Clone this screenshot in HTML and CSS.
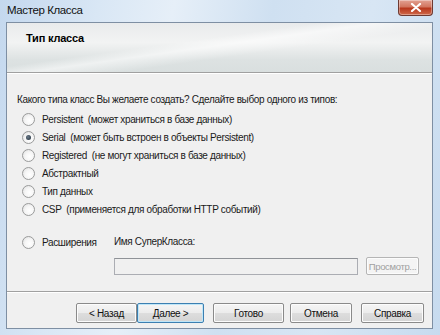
FILE: index.html
```html
<!DOCTYPE html>
<html lang="ru">
<head>
<meta charset="utf-8">
<title>Мастер Класса</title>
<link rel="stylesheet" href="styles.css">
</head>
<body>
<div class="window">
  <div class="titlebar">
    <span class="title">Мастер Класса</span>
    <div class="close"><svg width="12" height="9" viewBox="0 0 12 9"><path d="M2 1 L10 8 M10 1 L2 8" stroke="#fff" stroke-width="2.2" stroke-linecap="round"/></svg></div>
  </div>
  <div class="client">
    <div class="banner">
      <div class="banner-title">Тип класса</div>
    </div>
    <div class="content">
      <div class="question">Какого типа класс Вы желаете создать? Сделайте выбор одного из типов:</div>
      <div class="options">
        <div class="opt"><span class="radio"></span><span>Persistent&nbsp; (может храниться в базе данных)</span></div>
        <div class="opt"><span class="radio checked"></span><span>Serial&nbsp; (может быть встроен в объекты Persistent)</span></div>
        <div class="opt"><span class="radio"></span><span>Registered&nbsp; (не могут храниться в базе данных)</span></div>
        <div class="opt"><span class="radio"></span><span>Абстрактный</span></div>
        <div class="opt"><span class="radio"></span><span>Тип данных</span></div>
        <div class="opt"><span class="radio"></span><span>CSP&nbsp; (применяется для обработки HTTP событий)</span></div>
      </div>
      <div class="ext-row">
        <div class="opt ext-opt"><span class="radio"></span><span>Расширения</span></div>
        <div class="super-label">Имя СуперКласса:</div>
      </div>
      <div class="super-row">
        <div class="super-input"></div>
        <div class="btn btn-browse">Просмотр...</div>
      </div>
    </div>
    <div class="separator"></div>
    <div class="buttons">
      <div class="btn btn-back">&lt; Назад</div>
      <div class="btn btn-next">Далее &gt;</div>
      <div class="btn btn-finish">Готово</div>
      <div class="btn btn-cancel">Отмена</div>
      <div class="btn btn-help">Справка</div>
    </div>
  </div>
</div>
</body>
</html>
```
FILE: styles.css
```css
* { box-sizing: border-box; }
html, body { margin: 0; padding: 0; }
body {
  width: 440px;
  height: 335px;
  overflow: hidden;
  font-family: "Liberation Sans", Arial, sans-serif;
  font-size: 10px;
  letter-spacing: -0.35px;
  color: #1a1a1a;
}
.window {
  width: 440px;
  height: 335px;
  display: flex;
  flex-direction: column;
  background: linear-gradient(100deg, #c4d8ee 0%, #d9e7f5 20%, #e6eff8 35%, #cfe0f1 55%, #d8e6f4 75%, #c7dbef 100%);
}
.titlebar {
  height: 22px;
  position: relative;
  display: flex;
  align-items: center;
  padding-left: 7px;
}
.title {
  font-size: 11.5px;
  letter-spacing: -0.4px;
  color: #111;
  padding-bottom: 2px;
}
.close {
  position: absolute;
  right: 7px;
  top: 0;
  width: 35px;
  height: 16px;
  border: 1px solid #6e3a32;
  border-top: none;
  border-radius: 0 0 4px 4px;
  background: linear-gradient(to bottom, #e3a293 0%, #d2765f 45%, #b8381d 55%, #cf6a4b 100%);
  display: flex;
  align-items: center;
  justify-content: center;
  box-shadow: inset 0 0 0 1px rgba(255,255,255,0.35);
}
.client {
  margin: 0 7px 0 6px;
  height: 307px;
  border: 1px solid #7e8fa3;
  background: #f0f0f0;
  display: flex;
  flex-direction: column;
}
.banner {
  height: 50px;
  border-bottom: 1px solid #a0a0a0;
  box-shadow: 0 1px 0 #ffffff;
  background:
    linear-gradient(172deg, rgba(255,255,255,0) 40%, rgba(255,255,255,0.55) 48%, rgba(255,255,255,0) 60%),
    linear-gradient(to bottom, #e9ebec 0%, #f2f3f3 40%, #dde2e2 75%, #d9dfdf 100%);
  padding: 9px 0 0 19px;
}
.banner-title {
  font-weight: bold;
  font-size: 11px;
  letter-spacing: -0.2px;
  color: #000;
}
.content {
  padding: 20px 0 0 10px;
  display: flex;
  flex-direction: column;
}
.question {
  line-height: 14px;
  height: 14px;
}
.options {
  margin-top: 3px;
  display: flex;
  flex-direction: column;
}
.opt {
  height: 18px;
  display: flex;
  align-items: center;
  gap: 7px;
  padding-left: 5px;
}
.radio {
  width: 13px;
  height: 13px;
  border-radius: 50%;
  border: 1px solid #9a9b9b;
  background: radial-gradient(circle at 60% 60%, #ffffff 0%, #f6f6f6 45%, #dcdcdc 100%);
  flex: none;
  position: relative;
}
.radio.checked::after {
  content: "";
  position: absolute;
  left: 3px;
  top: 3px;
  width: 5px;
  height: 5px;
  border-radius: 50%;
  background: radial-gradient(circle at 40% 40%, #6b7b8a 0%, #1d2a36 100%);
}
.ext-row {
  margin-top: 15px;
  display: flex;
  align-items: center;
  height: 18px;
}
.ext-opt {
  width: 97px;
}
.super-label {
  line-height: 18px;
}
.super-row {
  margin-top: 6px;
  margin-left: 97px;
  display: flex;
  align-items: center;
  gap: 8px;
}
.super-input {
  width: 244px;
  height: 17px;
  border: 1px solid #abadb3;
  border-top-color: #8f9297;
  background: #f0f0f0;
}
.btn {
  height: 20px;
  border: 1px solid #8a8a8a;
  border-radius: 2px;
  background: linear-gradient(to bottom, #f5f5f5 0%, #ececec 48%, #dddddd 52%, #d4d4d4 100%);
  display: flex;
  align-items: center;
  justify-content: center;
  box-shadow: inset 0 0 0 1px #fcfcfc;
  color: #111;
}
.btn-browse {
  width: 53px;
  height: 18px;
  color: #a0a0a0;
  font-size: 9.5px;
  border-color: #b5b5b5;
  background: #f4f4f4;
}
.separator {
  margin-top: 16px;
  height: 2px;
  border-top: 1px solid #a0a0a0;
  border-bottom: 1px solid #ffffff;
}
.buttons {
  margin-top: 10px;
  display: flex;
  padding-left: 69px;
}
.btn-back { width: 61px; }
.btn-next { width: 67px; border-color: #3c7fb1; box-shadow: inset 0 0 0 1px #bfe6f8; }
.btn-finish { width: 71px; margin-left: 9px; }
.btn-cancel { width: 62px; margin-left: 6px; }
.btn-help { width: 63px; margin-left: 9px; }
```
